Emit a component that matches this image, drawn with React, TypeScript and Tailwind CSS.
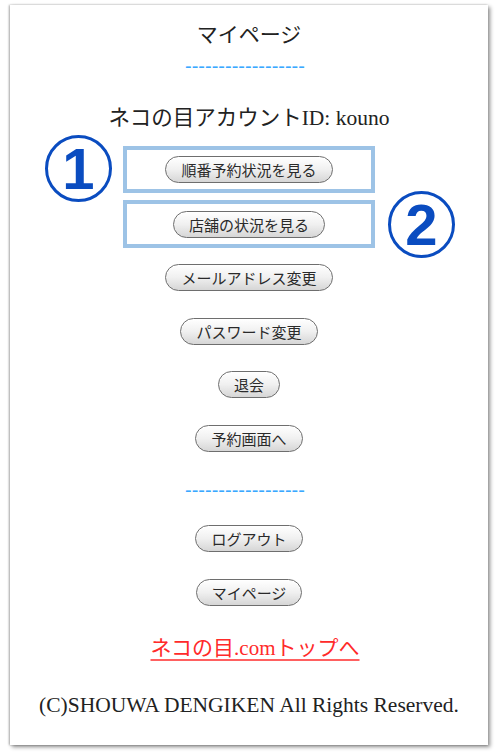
import React from "react";

const serif = "font-['Liberation_Serif','Noto_Sans_CJK_JP',serif]";

function Btn({ label }: { label: string }) {
  return (
    <button
      className="h-[27px] rounded-full border border-[#6e6e6e] bg-gradient-to-b from-[#ffffff] via-[#f0f0f0] to-[#d6d6d6] px-[15px] text-[15px] leading-[25px] text-[#2a2a2a] font-['Noto_Sans_CJK_JP',sans-serif] shadow-[inset_0_1px_0_#ffffff]"
    >
      {label}
    </button>
  );
}

function Dashes() {
  return (
    <div className="-ml-[8px] text-[20px] leading-[20px] h-[20px] text-[#3aa8ff] font-['Liberation_Sans',sans-serif] overflow-hidden">
      ------------------
    </div>
  );
}

function Circle({ n }: { n: string }) {
  return (
    <div className="w-[67px] h-[67px] rounded-full border-[3px] border-[#0a4cc0] flex items-center justify-center text-[#0a4cc0] text-[58px] font-bold leading-none font-['Liberation_Sans',sans-serif]">
      {n}
    </div>
  );
}

export default function App() {
  return (
    <div className="w-[500px] h-[753px] bg-white relative">
      <div className="absolute left-[10px] top-[5px] w-[478px] h-[740px] bg-white shadow-[2px_2px_4px_rgba(0,0,0,0.45),-1px_0_2px_rgba(0,0,0,0.3)]">
        <div className={`flex flex-col items-center ${serif} text-[#222222]`}>
          <div className="mt-[16px] text-[21px] leading-[28px]">マイページ</div>
          <div className="mt-[7px]">
            <Dashes />
          </div>
          <div className="mt-[28px] text-[21.5px] leading-[28px]">ネコの目アカウントID: kouno</div>
          <div className="mt-[14px] w-[252px] h-[47px] border-[4px] border-[#9dc3e6] flex items-center justify-center">
            <Btn label="順番予約状況を見る" />
          </div>
          <div className="mt-[7px] w-[252px] h-[48px] border-[4px] border-[#9dc3e6] flex items-center justify-center">
            <Btn label="店舗の状況を見る" />
          </div>
          <div className="mt-[16px]">
            <Btn label="メールアドレス変更" />
          </div>
          <div className="mt-[27px]">
            <Btn label="パスワード変更" />
          </div>
          <div className="mt-[26px]">
            <Btn label="退会" />
          </div>
          <div className="mt-[27px]">
            <Btn label="予約画面へ" />
          </div>
          <div className="mt-[28px]">
            <Dashes />
          </div>
          <div className="mt-[25px]">
            <Btn label="ログアウト" />
          </div>
          <div className="mt-[27px]">
            <Btn label="マイページ" />
          </div>
          <a
            href="#"
            className="mt-[28px] ml-[12px] text-[21px] leading-[28px] text-[#ff2a2a] underline decoration-[#ff6060] underline-offset-[4px]"
          >
            ネコの目.comトップへ
          </a>
          <div className="mt-[30px] text-[21.5px] leading-[26px] text-[#222222]">
            (C)SHOUWA DENGIKEN All Rights Reserved.
          </div>
        </div>
      </div>
      <div className="absolute left-[45px] top-[135px]">
        <Circle n="1" />
      </div>
      <div className="absolute left-[388px] top-[191px]">
        <Circle n="2" />
      </div>
    </div>
  );
}
